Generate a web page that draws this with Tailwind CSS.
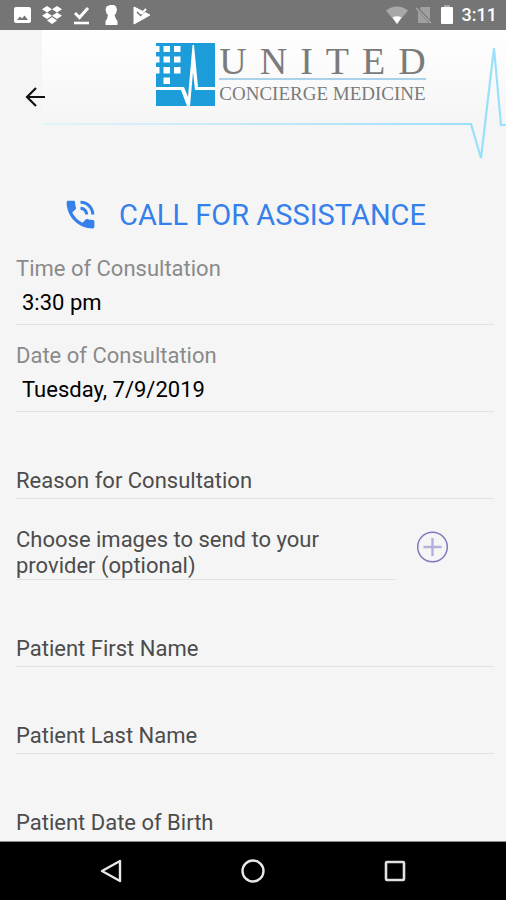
<!DOCTYPE html>
<html lang="en">
  <head>
    <meta charset="UTF-8">
    <meta name="viewport" content="width=device-width, initial-scale=1.0">
    <title>United Concierge Medicine</title>
    <script src="https://cdn.jsdelivr.net/npm/@tailwindcss/browser@4"></script>
  </head>
  <body class="min-h-screen flex flex-col bg-[#f5f5f5] text-black font-[Roboto,sans-serif]">
    <!-- status bar -->
    <div class="h-[30px] shrink-0 flex items-center justify-between pl-[11px] pr-[9px] bg-[#757575] text-white">
      <div class="flex items-center gap-2">
        <svg class="w-[22px] h-[22px]" viewBox="0 0 22 22" fill="#fff">
          <path fill-rule="evenodd" d="M5 3h13a2 2 0 0 1 2 2v12a2 2 0 0 1-2 2H5a2 2 0 0 1-2-2V5a2 2 0 0 1 2-2zm1 13h11l-3.500-4.500-2.500 3-2-2z"/>
        </svg>
        <svg class="w-[22px] h-[22px]" viewBox="0 0 22 22" fill="#fff">
          <path d="M6 2l5 3.200-5 3.200-5-3.200zM16 2l5 3.200-5 3.200-5-3.200zM6 8.600l5 3.200-5 3.200-5-3.200zM16 8.600l5 3.200-5 3.200-5-3.200zM11 13l5 3.500-5 3.500-5-3.500z"/>
        </svg>
        <svg class="w-[22px] h-[22px]" viewBox="0 0 22 22" fill="none" stroke="#fff">
          <path d="M4 9l4.500 4.500L17 4" stroke-width="3"/>
          <path d="M3 19h15" stroke-width="2.600"/>
        </svg>
        <svg class="w-[22px] h-[22px]" viewBox="0 0 22 22" fill="#fff">
          <path d="M9 1h4l2 1.500 1 3-1 4-1.500 1.500L15 15l1.500 2v4H4.500v-4l1.500-2 1-4-1.500-1.500-1-4 1-3z"/>
        </svg>
        <svg class="w-[22px] h-[22px]" viewBox="0 0 22 22">
          <path d="M3 3l16 8L3 20z" fill="#fff" stroke="#fff" stroke-linejoin="round"/>
          <path d="M6 8l3.500 3.500L16 5" fill="none" stroke="#757575" stroke-width="1.500"/>
          <path d="M9 8l2 1.500L15 5" fill="none" stroke="#fff" stroke-width="2"/>
        </svg>
      </div>
      <div class="flex items-center gap-2">
        <svg class="w-[22px] h-[20px]" viewBox="0 0 22 20">
          <path d="M0 5.500Q11-2.500 22 5.500L11 19z" fill="#a8a8a8"/>
          <path d="M6.500 12.500Q11 10 15.500 12.500L11 19z" fill="#fff"/>
        </svg>
        <svg class="w-[16px] h-[18px]" viewBox="0 0 16 18">
          <path d="M5 1h9v16H2V5z" fill="#a0a0a0"/>
          <path d="M0 1l16 17" stroke="#757575" stroke-width="3"/>
          <path d="M0 2l15 15" stroke="#a8a8a8" stroke-width="1.500"/>
        </svg>
        <svg class="w-[14px] h-[20px]" viewBox="0 0 14 20">
          <path d="M4 0h6v3H4z" fill="#a8a8a8"/>
          <rect x="1" y="2" width="12" height="17" rx="1" fill="#fff"/>
        </svg>
        <span class="text-[18px] leading-5 font-medium">3:11</span>
      </div>
    </div>

    <header class="relative h-[134px] shrink-0">
      <!-- banner with the pulse line -->
      <div class="absolute inset-y-0 left-[42px] right-0 flex bg-linear-to-b from-white to-[#f5f5f5] to-70%">
        <div class="flex-1 flex flex-col justify-end h-[95px]">
          <div class="h-[2px] bg-linear-to-r from-[#e3f3f9] via-[#c2e8f8] to-[#9be0fb]"></div>
        </div>
        <svg class="w-[36px] h-[134px]" viewBox="0 0 36 134" fill="none" stroke="#9be0fb" stroke-width="2.200">
          <path d="M0 94h1L11 128 24 18l7 77h5"/>
        </svg>
      </div>
      <div class="relative flex pt-[13px]">
        <button type="button" aria-label="Back" class="w-[24px] h-[24px] ml-[24px] mt-[42px]">
          <svg viewBox="0 0 24 24" fill="none" stroke="#111" stroke-width="2.200">
            <path d="M21 12H3M12 3l-9 9 9 9"/>
          </svg>
        </button>
        <div class="flex-1 flex justify-center pl-[28px]">
          <div class="flex gap-1">
            <svg class="w-[59px] h-[63px]" viewBox="0 0 59 63">
              <path d="M0 0h59v63H0z" fill="#1c9dd9"/>
              <path d="M0 3h3.500v6H0zM0 13.500h3.500v6H0zM0 24h3.500v6.500H0zM7.500 3h6.500v6H7.500zM7.500 13.500h6.500v6H7.500zM7.500 24h6.500v6.500H7.500zM7.500 34.500h6.500v6.500H7.500zM18 3h6.500v6H18zM18 13.500h6.500v6H18zM18 24h6.500v6.500H18z" fill="#fff"/>
              <path d="M0 44h28l4 10 4.500-52h1.500l4 42h17v3H39l-2-18-3 34h-3l-6-16H0z" fill="#fff"/>
            </svg>
            <div class="text-[#7b7b7b] font-['Liberation_Serif',serif]">
              <div aria-label="United" class="flex justify-between h-[37px] text-[38px] leading-9 border-b-2 border-[#abd0ea]">
                <span>U</span><span>N</span><span>I</span><span>T</span><span>E</span><span>D</span>
              </div>
              <div class="text-[19px] leading-7">CONCIERGE MEDICINE</div>
            </div>
          </div>
        </div>
      </div>
    </header>

    <main class="flex-1">
      <a href="tel:" class="flex items-center justify-center gap-5 pt-[32px] pb-[5px] pr-[18px] text-[29px] leading-9 text-[#3580ea]">
        <svg class="w-[37px] h-[37px]" viewBox="0 0 24 24" fill="currentColor">
          <path d="M20 15.500c-1.250 0-2.450-.2-3.570-.57-.35-.11-.74-.03-1.020.24l-2.200 2.200c-2.830-1.440-5.150-3.750-6.590-6.590l2.200-2.210c.28-.26.36-.65.25-1C8.700 6.450 8.500 5.250 8.500 4c0-.55-.45-1-1-1H4c-.55 0-1 .45-1 1 0 9.390 7.610 17 17 17 .55 0 1-.45 1-1v-3.500c0-.55-.45-1-1-1zM19 12h2c0-4.970-4.030-9-9-9v2c3.870 0 7 3.130 7 7zm-4 0h2c0-2.760-2.240-5-5-5v2c1.660 0 3 1.340 3 3z"/>
        </svg>
        CALL FOR ASSISTANCE
      </a>

      <form class="pl-4 pr-3 text-[22px]">
        <div class="pt-[18px] pb-[2px] border-b border-[#e2e2e2]">
          <label for="time" class="block leading-[26px] text-[#8a8a8a]">Time of Consultation</label>
          <input id="time" type="text" value="3:30 pm" class="block w-full h-[40px] pl-[6px] outline-none">
        </div>
        <div class="pt-[18px] pb-[2px] border-b border-[#e2e2e2]">
          <label for="date" class="block leading-[26px] text-[#8a8a8a]">Date of Consultation</label>
          <input id="date" type="text" value="Tuesday, 7/9/2019" class="block w-full h-[40px] pl-[6px] outline-none">
        </div>
        <div class="pt-[50px] border-b border-[#e2e2e2]">
          <input type="text" aria-label="Reason for Consultation" placeholder="Reason for Consultation" class="block w-full h-[36px] outline-none placeholder:text-[#4c4c4c]">
        </div>
        <div class="flex items-start pr-[46px]">
          <p id="images" class="flex-1 pt-[28px] border-b border-[#e2e2e2] leading-[26px] text-[#4c4c4c]">Choose images to send to your<br>provider (optional)</p>
          <button type="button" aria-label="Add image" aria-describedby="images" class="w-[32px] h-[32px] ml-[20px] mt-[32px]">
            <svg viewBox="0 0 32 32" fill="none">
              <circle cx="16.500" cy="16" r="14.800" stroke="#7d7ac0" stroke-width="1.500"/>
              <path d="M7.500 16h18M16.500 7v18" stroke="#b3b1dc" stroke-width="2.400"/>
            </svg>
          </button>
        </div>
        <div class="pt-[50px] border-b border-[#e2e2e2]">
          <input type="text" aria-label="Patient First Name" placeholder="Patient First Name" class="block w-full h-[36px] outline-none placeholder:text-[#4c4c4c]">
        </div>
        <div class="pt-[50px] border-b border-[#e2e2e2]">
          <input type="text" aria-label="Patient Last Name" placeholder="Patient Last Name" class="block w-full h-[36px] outline-none placeholder:text-[#4c4c4c]">
        </div>
        <div class="pt-[50px]">
          <input type="text" aria-label="Patient Date of Birth" placeholder="Patient Date of Birth" class="block w-full h-[36px] outline-none placeholder:text-[#4c4c4c]">
        </div>
      </form>
    </main>

    <!-- system navigation -->
    <nav class="h-[59px] shrink-0 grid grid-cols-3 place-items-center px-10 bg-black border-t border-[#8a8a8a]">
      <button type="button" aria-label="System back" class="w-[24px] h-[24px]">
        <svg viewBox="0 0 24 24" fill="none" stroke="#e8e8e8" stroke-width="2.400" stroke-linejoin="round"><path d="M21 2v20L3 12z"/></svg>
      </button>
      <button type="button" aria-label="Home" class="w-[24px] h-[24px]">
        <svg viewBox="0 0 24 24" fill="none" stroke="#e8e8e8" stroke-width="2.400"><circle cx="12" cy="12" r="10.500"/></svg>
      </button>
      <button type="button" aria-label="Recent apps" class="w-[24px] h-[24px]">
        <svg viewBox="0 0 24 24" fill="none" stroke="#e0e0e0" stroke-width="2.600"><rect x="3" y="3" width="18" height="18" rx="1"/></svg>
      </button>
    </nav>
  </body>
</html>
